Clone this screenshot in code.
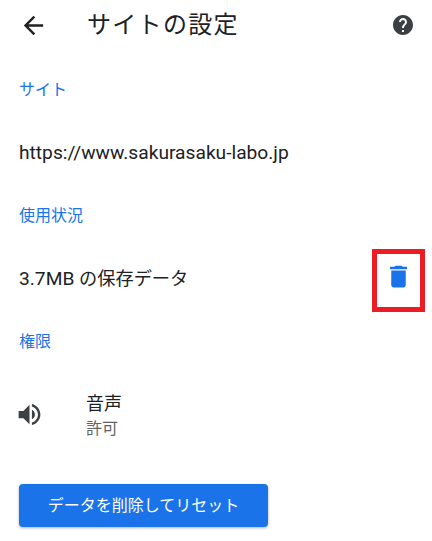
<div class="page">
  <header class="bar">
    <svg class="back" width="29" height="29" viewBox="0 0 24 24"><path fill="#202124" d="M20 11H7.83l5.59-5.59L12 4l-8 8 8 8 1.41-1.41L7.83 13H20v-2z"/></svg>
    <h1>サイトの設定</h1>
    <svg class="help" width="24" height="24" viewBox="0 0 24 24"><path fill="#3c4043" d="M12 2C6.48 2 2 6.48 2 12s4.48 10 10 10 10-4.48 10-10S17.52 2 12 2zm1 17h-2v-2h2v2zm2.07-7.75l-.9.92C13.45 12.9 13 13.5 13 15h-2v-.5c0-1.1.45-2.1 1.17-2.83l1.24-1.26c.37-.36.59-.86.59-1.41 0-1.1-.9-2-2-2s-2 .9-2 2H8c0-2.21 1.79-4 4-4s4 1.79 4 4c0 .88-.36 1.68-.93 2.25z"/></svg>
  </header>

  <section>
    <h2>サイト</h2>
    <div class="row url">https://www.sakurasaku-labo.jp</div>
    <h2>使用状況</h2>
    <div class="row between">
      <span>3.7MB <span class="cjk">の保存データ</span></span>
      <svg class="trash" width="29" height="29" viewBox="0 0 24 24"><path fill="#1a73e8" d="M6 19c0 1.1.9 2 2 2h8c1.1 0 2-.9 2-2V7H6v12zM19 4h-3.5l-1-1h-5l-1 1H5v2h14V4z"/></svg>
    </div>
    <h2>権限</h2>
    <div class="perm-row">
      <svg class="speaker" width="29" height="29" viewBox="0 0 24 24"><path fill="#3c4043" d="M3 9v6h4l5 5V4L7 9H3zm13.5 3c0-1.77-1.02-3.29-2.5-4.03v8.05c1.48-.73 2.5-2.25 2.5-4.02zM14 3.23v2.06c2.89.86 5 3.54 5 6.71s-2.11 5.85-5 6.71v2.06c4.01-.91 7-4.49 7-8.77s-2.99-7.86-7-8.77z"/></svg>
      <div class="perm-text">
        <div class="perm-name">音声</div>
        <div class="perm-state">許可</div>
      </div>
    </div>
    <button class="reset">データを削除してリセット</button>
  </section>

  <div class="mark"></div>
</div>

<style>
  :global(body) {
    margin: 0;
    background: #fff;
  }
  .page {
    position: relative;
    width: 432px;
    height: 541px;
    overflow: hidden;
    font-family: Roboto, "Noto Sans CJK JP", sans-serif;
    color: #202124;
    background: #fff;
  }
  .bar {
    display: flex;
    align-items: center;
    height: 50px;
    padding: 0 17px 0 19px;
  }
  .back, .help, .trash, .speaker { flex: none; }
  h1 {
    margin: 0 0 0 39px;
    flex: 1;
    font-size: 24px;
    font-weight: 400;
    letter-spacing: 1.3px;
    line-height: 50px;
  }
  section {
    padding: 6px 19px 0;
  }
  h2 {
    margin: 0;
    height: 63px;
    display: flex;
    align-items: center;
    font-size: 16px;
    font-weight: 400;
    color: #1a73e8;
  }
  .row {
    box-sizing: border-box;
    height: 63px;
    display: flex;
    align-items: center;
    font-size: 19.2px;
  }
  .url { padding-top: 3px; }
  .cjk { font-size: 18.2px; }
  .between { justify-content: space-between; }
  .perm-row {
    display: flex;
    align-items: center;
    padding-top: 20px;
  }
  .speaker {
    margin-left: -4px;
    margin-bottom: 4px;
  }
  .perm-text { margin-left: 42px; }
  .perm-name { font-size: 18px; line-height: 25px; }
  .perm-state { font-size: 16px; line-height: 25px; color: #5f6368; }
  .reset {
    display: block;
    margin: 43px 0 0;
    width: 249px;
    height: 43px;
    padding: 0 0 3px;
    border: none;
    border-radius: 4px;
    background: #1a73e8;
    color: #fff;
    font: inherit;
    font-size: 16px;
    box-shadow: 0 1px 3px rgba(60, 64, 67, 0.4);
  }
  .mark {
    position: absolute;
    left: 372px;
    top: 249px;
    width: 53px;
    height: 63px;
    box-sizing: border-box;
    border: 5px solid #ed1c24;
  }
</style>
